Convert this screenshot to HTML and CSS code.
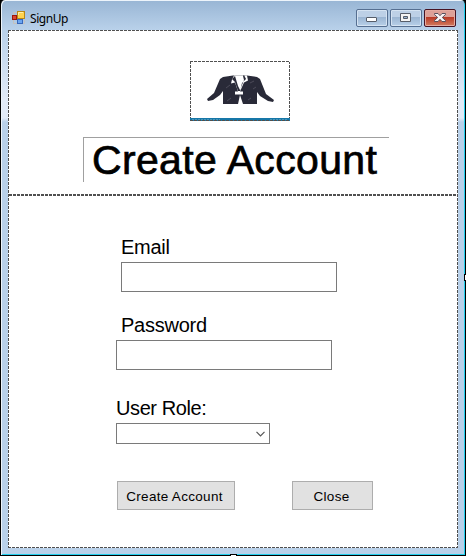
FILE: index.html
```html
<!DOCTYPE html>
<html lang="en">
<head>
<meta charset="utf-8">
<title>SignUp</title>
<link rel="stylesheet" href="styles.css">
</head>
<body>
<div class="window">
  <header class="titlebar">
    <svg class="app-icon" width="14" height="14" viewBox="0 0 14 14">
      <path d="M1.500 4V1.500H5M1.500 9v3.500H5M9 12.500h3.500V9" fill="none" stroke="#c5c1bd"/>
      <rect x="5.500" y=".5" width="7" height="7" fill="#ffd34e" stroke="#b88716"/>
      <path d="M6.500 4V1.500H11" fill="none" stroke="#fff0a8"/>
      <rect x=".5" y="4.500" width="4" height="4" fill="#d84632" stroke="#9c170d"/>
      <rect x="5.500" y="8.500" width="5" height="4" fill="#6ba5f0" stroke="#3768bc"/>
    </svg>
    <span class="title">SignUp</span>
    <div class="controls">
      <span class="control"><svg width="30" height="16" viewBox="0 0 30 16"><rect x="9.500" y="7.500" width="10" height="4" rx=".5" fill="#fff" stroke="#565d69"/></svg></span>
      <span class="control"><svg width="30" height="16" viewBox="0 0 30 16"><path fill-rule="evenodd" d="M9.500 3.500h10v8h-10zM12.500 6.500v2h4v-2z" fill="#f4f4f4" stroke="#565d69"/></svg></span>
      <span class="control control-close"><svg width="30" height="16" viewBox="0 0 30 16"><path d="M9.500 3.500h3.500l2 2.200 2-2.200h3.500v1L17.300 7.500l3.200 3v1H17l-2-2.200-2 2.200H9.500v-1l3.200-3-3.200-3z" fill="#f7f4f4" stroke="#57505d"/></svg></span>
    </div>
  </header>
  <main class="client">
    <section class="banner">
      <div class="picture">
        <svg width="100" height="60" viewBox="0 0 100 60">
          <path d="M33 16l10-1.500h14l10 1.500 3 2 6 15 8 6-1 2-5-1-8-5-3-4v12H33V30l-3 4-7 5-5 1-1-2 7-6 6-14z" fill="#292a38"/>
          <path d="M44 14.500h13l1 5-4 2-4 9h3v3h-8v-3h3l-3-9-4 1 1-4z" fill="#fff"/>
          <path d="M45 15l3 10 2 4 4-10-1-4 1-1 2 4-4 4-2 8h-2l-3-9-3-3z" fill="#292a38"/>
          <path d="M47 16h5l-2 10z" fill="#fff"/>
          <path d="M50 34l3 9h-5z" fill="#fff"/>
          <path d="M36 27l4-3M63 28l3-2M37 40l4-3M58 39l3-2M60 22l4-2" stroke="#4c4b59" fill="none"/>
          <path d="M0 58.500h100" stroke="#1677a8" stroke-width="3"/>
          <path d="M2 58.500h28M80 58.500h18" stroke="#6eaac4" stroke-dasharray="2 1" opacity=".6"/>
          <path d="M0 59.500h100" stroke="#505050" stroke-dasharray="3 1"/>
        </svg>
      </div>
      <h1 class="heading">Create Account</h1>
    </section>
    <form class="form">
      <label class="label label-inset" for="email">Email</label>
      <input class="field field-inset" id="email" type="text">
      <label class="label label-inset label-password" for="password">Password</label>
      <input class="field" id="password" type="password">
      <label class="label label-role" for="role">User Role:</label>
      <button class="combo" id="role" type="button" aria-label="User Role"><svg width="9" height="6" viewBox="0 0 9 6"><path d="M.5 .8l4 4 4-4" fill="none" stroke="#555" stroke-width="1.200"/></svg></button>
      <div class="actions">
        <button class="button" type="button">Create Account</button>
        <button class="button button-close" type="button">Close</button>
      </div>
    </form>
  </main>
  <i class="handle handle-right"></i>
  <i class="handle handle-bottom"></i>
</div>
</body>
</html>
```
FILE: styles.css
```css
* { box-sizing: border-box; }
body {
  margin: 0;
  background: #000;
  font-family: "Liberation Sans", Arial, sans-serif;
  color: #000;
}
.window {
  position: relative;
  width: 466px;
  height: 556px;
  padding: 0 7px 7px;
  border: 1px solid #000;
  border-top-width: 0;
  border-radius: 5px 5px 0 0;
  background: linear-gradient(#98b5d4 0, #b9d1ea 30px, #e2ebf7 100px, #e2ebf7 118px, #b9d1ea 122px);
  box-shadow: inset 1px 1px #edf4fb, inset -1px -1px #22d0ee;
}
.titlebar {
  display: flex;
  align-items: flex-start;
  height: 30px;
  padding-left: 4px;
}
.app-icon { margin-top: 11px; }
.title {
  margin: 10px 0 0 4px;
  font: 12px/18px "Noto Sans", sans-serif;
  letter-spacing: -.45px;
}
.controls {
  display: flex;
  gap: 2px;
  margin: 9px 2px 0 auto;
}
.control {
  width: 32px;
  height: 18px;
  border: 1px solid #566f91;
  border-radius: 2px;
  background: linear-gradient(#bdd0e6 0 45%, #9bb5d2 46%, #b8d0e9);
  box-shadow: inset 0 0 0 1px #d5e3f2;
}
.control-close {
  border-color: #471322;
  background: linear-gradient(#dda097 0 45%, #b93a26 46%, #d27c60);
  box-shadow: inset 0 0 0 1px #e5aaa0;
}
.control svg { display: block; }
.client {
  height: 518px;
  padding: 1px;
  background:
    repeating-linear-gradient(90deg, #505050 0 3px, #fff 3px 4px) 0 0 / 100% 1px no-repeat,
    repeating-linear-gradient(90deg, #505050 0 3px, #fff 3px 4px) 0 100% / 100% 1px no-repeat,
    repeating-linear-gradient(#505050 0 3px, #fff 3px 4px) 0 0 / 1px 100% no-repeat,
    repeating-linear-gradient(#505050 0 3px, #fff 3px 4px) 100% 0 / 1px 100% no-repeat,
    #fff;
}
.banner {
  height: 165px;
  padding: 30px 0 0 74px;
  background: repeating-linear-gradient(90deg, #505050 0 3px, #fff 3px 4px) 0 100% / 100% 2px no-repeat;
}
.picture {
  width: 100px;
  height: 60px;
  margin-left: 107px;
  background:
    repeating-linear-gradient(90deg, #505050 0 3px, #fff 3px 4px) 0 0 / 100% 1px no-repeat,
    repeating-linear-gradient(#505050 0 3px, #fff 3px 4px) 0 0 / 1px 100% no-repeat,
    repeating-linear-gradient(#505050 0 3px, #fff 3px 4px) 100% 0 / 1px 100% no-repeat;
}
.picture svg { display: block; }
.heading {
  width: 306px;
  height: 45px;
  margin: 16px 0 0;
  padding-left: 8px;
  border: solid #a0a0a0;
  border-width: 1px 0 0 1px;
  font-size: 41px;
  font-weight: 400;
  line-height: 44px;
  white-space: nowrap;
  letter-spacing: .35px;
  -webkit-text-stroke: .7px #000;
}
.form {
  display: flex;
  flex-direction: column;
  align-items: flex-start;
  padding: 40px 0 0 107px;
}
.label {
  height: 26px;
  font-size: 20px;
  line-height: 22px;
  letter-spacing: -.25px;
}
.label-inset { margin-left: 5px; }
.field {
  width: 216px;
  height: 30px;
  border: 1px solid #7a7a7a;
  background: #fff;
  outline: 0;
}
.field-inset { margin-left: 5px; }
.label-password { margin-top: 22px; }
.label-role {
  height: 27px;
  margin: 26px 0 0;
  line-height: 24px;
  letter-spacing: -.4px;
}
.combo {
  display: flex;
  align-items: center;
  justify-content: flex-end;
  width: 154px;
  height: 21px;
  padding: 0 4px 0 0;
  border: 1px solid #7a7a7a;
  background: #fff;
}
.actions {
  display: flex;
  gap: 57px;
  margin: 37px 0 0 1px;
}
.button {
  width: 118px;
  height: 29px;
  padding: 1px 3px 0 0;
  border: 1px solid #adadad;
  background: #e1e1e1;
  color: #000;
  font: 13.5px "Liberation Sans", Arial, sans-serif;
  letter-spacing: .3px;
  white-space: nowrap;
}
.button-close {
  width: 81px;
  padding-right: 2px;
}
.handle {
  position: absolute;
  background: #fff;
  border: 1px solid #000;
}
.handle-right { top: 274px; right: -1px; width: 2px; height: 7px; border-width: 1px 0 1px 1px; }
.handle-bottom { left: 229px; bottom: -1px; width: 7px; height: 2px; border-width: 1px 1px 0; }
```
